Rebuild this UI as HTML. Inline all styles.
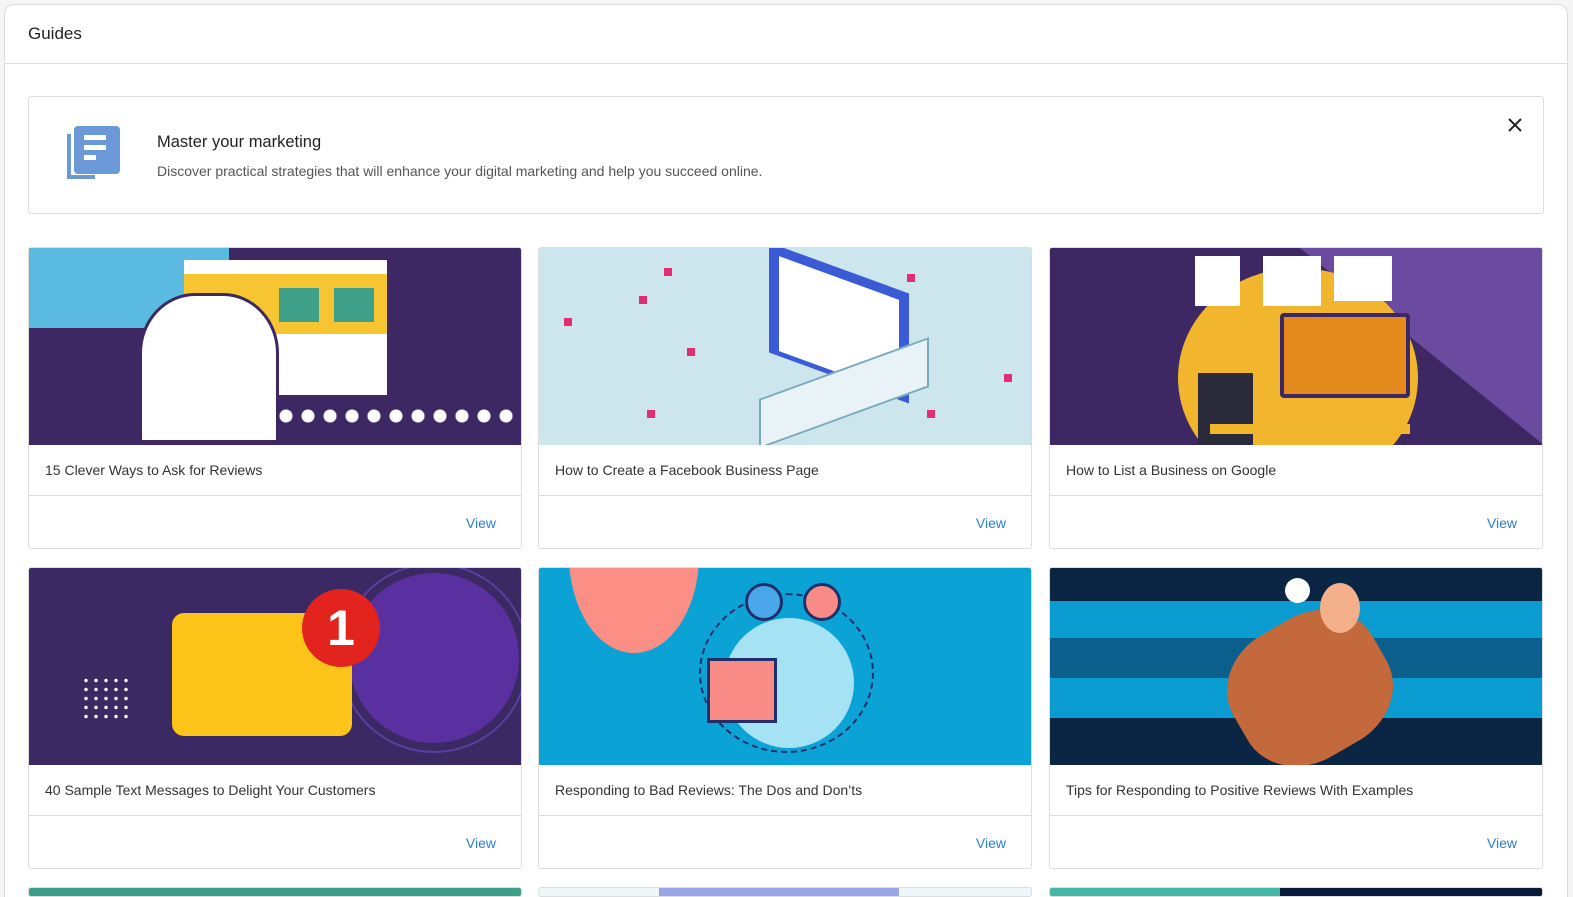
<!DOCTYPE html>
<html><head><meta charset="utf-8"><style>
*{box-sizing:border-box;margin:0;padding:0}
html,body{width:1573px;height:897px;overflow:hidden}
body{background:#f5f5f5;font-family:"Liberation Sans",sans-serif;color:#222;position:relative}
.outer{position:absolute;left:4px;top:4px;width:1564px;height:893px;background:#fff;border:1px solid #dcdcdc;border-bottom:none;border-radius:10px 10px 0 0}
.hdr{height:59px;border-bottom:1px solid #dedede;padding:19px 0 0 23px;font-size:17px}
.banner{position:absolute;left:23px;top:91px;width:1516px;height:118px;border:1px solid #ddd;border-radius:3px}
.banner h2{position:absolute;left:128px;top:36px;font-size:16.5px;font-weight:normal;color:#222}
.banner p{position:absolute;left:128px;top:66px;font-size:14px;color:#555}
.x{position:absolute;right:20px;top:20px}
.card{position:absolute;width:494px;height:302px;border:1px solid #ddd;border-radius:3px;overflow:hidden;background:#fff}
.img{height:197px;position:relative;overflow:hidden}
.t{height:51px;border-bottom:1px solid #ddd;padding:17px 0 0 16px;font-size:14px;color:#333}
.v{text-align:right;padding:19px 25px 0 0;font-size:14px;color:#2a7fd4}
</style></head><body>
<div class="outer">
<div class="hdr">Guides</div>
<div class="banner">
<svg style="position:absolute;left:37px;top:28px" width="56" height="56" viewBox="0 0 56 56"><rect x="1" y="9" width="4" height="45" fill="#6b98d6"/><rect x="1" y="50" width="28" height="4" fill="#6b98d6"/><rect x="8" y="1" width="46" height="48" rx="4" fill="#6b98d6"/><rect x="18" y="10" width="22" height="5" fill="#fff"/><rect x="18" y="20" width="22" height="5" fill="#fff"/><rect x="18" y="30" width="12" height="5" fill="#fff"/></svg>
<h2>Master your marketing</h2>
<p>Discover practical strategies that will enhance your digital marketing and help you succeed online.</p>
<svg class="x" width="16" height="16" viewBox="0 0 16 16"><path d="M2 2L14 14M14 2L2 14" stroke="#222" stroke-width="2"/></svg>
</div>
</div>

<div class="card" style="left:28px;top:247px"><div class="img" style="background:#3d2863">
<div style="position:absolute;left:0;top:0;width:200px;height:80px;background:#5bbadf"></div>
<div style="position:absolute;left:-60px;top:80px;width:320px;height:200px;border-radius:50%;background:#3d2863"></div>
<div style="position:absolute;left:155px;top:12px;width:203px;height:135px;background:#fff"></div>
<div style="position:absolute;left:155px;top:26px;width:203px;height:60px;background:#f6c531"></div>
<div style="position:absolute;left:250px;top:40px;width:40px;height:34px;background:#3fa08a"></div>
<div style="position:absolute;left:305px;top:40px;width:40px;height:34px;background:#3fa08a"></div>
<div style="position:absolute;left:110px;top:45px;width:140px;height:150px;border-radius:40% 40% 0 0;background:#fff;border:3px solid #3d2863"></div>
<div style="position:absolute;left:180px;top:160px;width:320px;height:16px;background:radial-gradient(circle,#fff 6px,transparent 7px) 0 0/22px 16px"></div>
</div><div class="t">15 Clever Ways to Ask for Reviews</div><div class="v">View</div></div>

<div class="card" style="left:538px;top:247px"><div class="img" style="background:#cde6ee">
<div style="position:absolute;left:230px;top:20px;width:140px;height:110px;background:#3b5bd6;transform:skewY(20deg)"></div>
<div style="position:absolute;left:240px;top:30px;width:120px;height:95px;background:#fff;transform:skewY(20deg)"></div>
<div style="position:absolute;left:220px;top:120px;width:170px;height:50px;background:#e9f3f7;transform:skewY(-20deg);border:2px solid #7ab"></div>
<div style="position:absolute;left:125px;top:20px;width:8px;height:8px;background:#e22d72"></div>
<div style="position:absolute;left:100px;top:48px;width:8px;height:8px;background:#e22d72"></div>
<div style="position:absolute;left:25px;top:70px;width:8px;height:8px;background:#e22d72"></div>
<div style="position:absolute;left:148px;top:100px;width:8px;height:8px;background:#e22d72"></div>
<div style="position:absolute;left:108px;top:162px;width:8px;height:8px;background:#e22d72"></div>
<div style="position:absolute;left:368px;top:26px;width:8px;height:8px;background:#e22d72"></div>
<div style="position:absolute;left:465px;top:126px;width:8px;height:8px;background:#e22d72"></div>
<div style="position:absolute;left:388px;top:162px;width:8px;height:8px;background:#e22d72"></div>
</div><div class="t">How to Create a Facebook Business Page</div><div class="v">View</div></div>

<div class="card" style="left:1049px;top:247px"><div class="img" style="background:#3d2863">
<div style="position:absolute;left:250px;top:0;width:244px;height:197px;background:#6a4ba0;clip-path:polygon(0 0,100% 0,100% 100%)"></div>
<div style="position:absolute;left:128px;top:20px;width:240px;height:220px;border-radius:50%;background:#f1b52e"></div>
<div style="position:absolute;left:230px;top:65px;width:130px;height:85px;background:#e48a1d;border:4px solid #3d2863;border-radius:4px"></div>
<div style="position:absolute;left:145px;top:8px;width:45px;height:50px;background:#fff"></div>
<div style="position:absolute;left:213px;top:8px;width:58px;height:50px;background:#fff"></div>
<div style="position:absolute;left:284px;top:8px;width:58px;height:45px;background:#fff"></div>
<div style="position:absolute;left:148px;top:125px;width:55px;height:72px;background:#2a2a3a"></div>
<div style="position:absolute;left:160px;top:176px;width:200px;height:10px;background:#f1b52e"></div>
</div><div class="t">How to List a Business on Google</div><div class="v">View</div></div>

<div class="card" style="left:28px;top:567px"><div class="img" style="background:#3b2963">
<div style="position:absolute;left:320px;top:5px;width:170px;height:170px;border-radius:50%;background:#5a2fa0;box-shadow:0 0 0 8px #3b2963,0 0 0 10px #5a3fa0"></div>
<div style="position:absolute;left:143px;top:45px;width:180px;height:123px;border-radius:12px;background:#fcc419"></div>
<div style="position:absolute;left:273px;top:21px;width:78px;height:78px;border-radius:50%;background:#e3231d;color:#fff;font:bold 50px 'Liberation Sans';text-align:center;line-height:78px">1</div>
<div style="position:absolute;left:52px;top:108px;width:50px;height:45px;background:radial-gradient(circle,#fff 1.5px,transparent 2px) 0 0/10px 9px"></div>
</div><div class="t">40 Sample Text Messages to Delight Your Customers</div><div class="v">View</div></div>

<div class="card" style="left:538px;top:567px"><div class="img" style="background:#0ba3d6">
<div style="position:absolute;left:30px;top:-110px;width:130px;height:195px;border-radius:50%;background:#fb8f86"></div>
<div style="position:absolute;left:160px;top:25px;width:175px;height:160px;border-radius:50%;border:2px dashed #1e2f6a"></div>
<div style="position:absolute;left:185px;top:50px;width:130px;height:130px;border-radius:50%;background:#a5e2f3"></div>
<div style="position:absolute;left:168px;top:90px;width:70px;height:65px;background:#f98b86;border:3px solid #1e2f6a"></div>
<div style="position:absolute;left:206px;top:15px;width:38px;height:38px;border-radius:50%;background:#49a6e8;border:3px solid #1e2f6a"></div>
<div style="position:absolute;left:264px;top:15px;width:38px;height:38px;border-radius:50%;background:#f98b86;border:3px solid #1e2f6a"></div>
</div><div class="t">Responding to Bad Reviews: The Dos and Don’ts</div><div class="v">View</div></div>

<div class="card" style="left:1049px;top:567px"><div class="img" style="background:#0a9bd0">
<div style="position:absolute;left:0;top:0;width:494px;height:33px;background:#0b2545"></div>
<div style="position:absolute;left:0;top:70px;width:494px;height:40px;background:#0b5f8c"></div>
<div style="position:absolute;left:0;top:150px;width:494px;height:50px;background:#0b2545"></div>
<div style="position:absolute;left:180px;top:50px;width:160px;height:140px;border-radius:40%;background:#c4693b;transform:rotate(-30deg)"></div>
<div style="position:absolute;left:270px;top:15px;width:40px;height:50px;border-radius:50%;background:#f3b08b"></div>
<div style="position:absolute;left:235px;top:10px;width:25px;height:25px;border-radius:50%;background:#fff"></div>
</div><div class="t">Tips for Responding to Positive Reviews With Examples</div><div class="v">View</div></div>

<div class="card" style="left:28px;top:887px;height:10px;background:#3e9e8c"></div>
<div class="card" style="left:538px;top:887px;height:10px;background:#eef7fa"><div style="position:absolute;left:120px;top:0;width:240px;height:10px;background:#9aa6e8"></div></div>
<div class="card" style="left:1049px;top:887px;height:10px;background:#44b6a6"><div style="position:absolute;left:230px;top:0;width:270px;height:10px;background:#0b1a3a"></div></div>
</body></html>
